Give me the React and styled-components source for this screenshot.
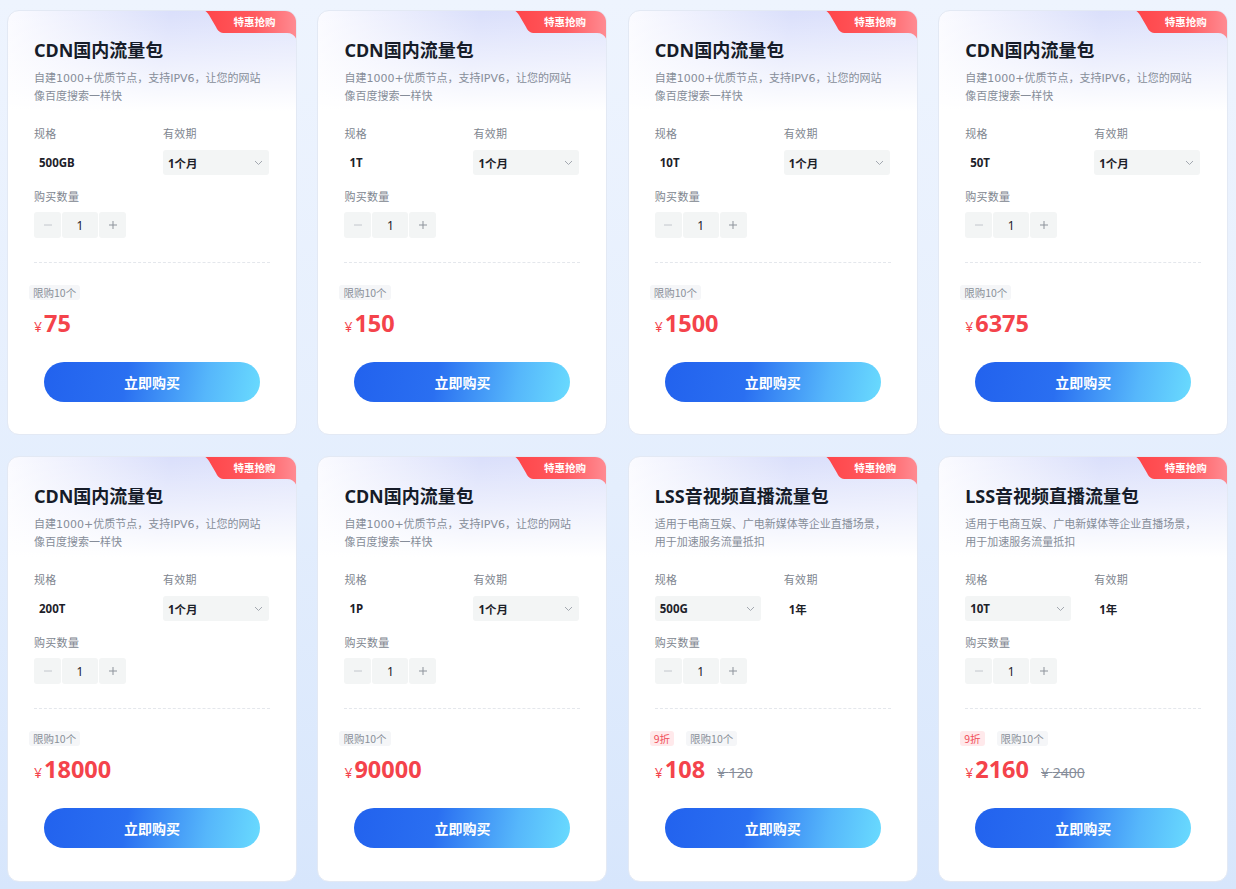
import React from "react";
import styled, { createGlobalStyle } from "styled-components";

const GlobalStyle = createGlobalStyle`
  html, body {
    margin: 0;
    padding: 0;
    min-height: 100%;
  }
  body {
    font-family: "Noto Sans", "Noto Sans CJK SC", sans-serif;
    background: linear-gradient(180deg, #eef4fe 0%, #e4eefd 55%, #d7e6fc 100%);
    min-height: 100vh;
  }
`;

const Page = styled.div`
  padding: 10px 8px 7px 7px;
`;

const Grid = styled.div`
  display: grid;
  grid-template-columns: repeat(4, 290px);
  column-gap: 20.4px;
  row-gap: 21px;
`;

const Card = styled.div`
  position: relative;
  overflow: hidden;
  box-sizing: border-box;
  height: ${(p) => p.$height}px;
  border-radius: 12px;
  border: 1px solid #e3e9f4;
  padding: 27px 26px 0 26px;
  background:
    linear-gradient(180deg, rgba(255, 255, 255, 0) 0px, #fff 100px),
    linear-gradient(100deg, #fbfbff 0%, #dadffb 45%, #e2e6fc 100%);
  display: flex;
  flex-direction: column;
`;

const BadgeWrap = styled.div`
  position: absolute;
  top: -1px;
  right: -1px;
  width: 95px;
  height: 34px;
`;

const BadgeText = styled.span`
  position: absolute;
  left: 18px;
  right: 8px;
  top: 0;
  height: 22px;
  display: flex;
  align-items: center;
  justify-content: center;
  font-family: "Noto Sans CJK SC", sans-serif;
  font-size: 10.5px;
  font-weight: 700;
  color: #fff;
`;

const Title = styled.div`
  font-family: "Noto Sans", "Noto Sans CJK SC", sans-serif;
  font-size: 18px;
  font-weight: 700;
  line-height: 24px;
  color: #161c29;
`;

const Desc = styled.div`
  margin-top: 8px;
  width: 233px;
  font-family: "DejaVu Sans", "Noto Sans CJK SC", sans-serif;
  font-size: 11px;
  line-height: 18px;
  color: #868d99;
  height: 36px;
`;

const FieldRow = styled.div`
  margin-top: 18px;
  display: grid;
  grid-template-columns: 129px 107px;
`;

const Field = styled.div`
  display: flex;
  flex-direction: column;
`;

const Label = styled.div`
  font-family: "Noto Sans CJK SC", sans-serif;
  font-size: 11px;
  letter-spacing: 0.3px;
  line-height: 18px;
  color: #80868f;
`;

const Value = styled.div`
  margin-top: 8px;
  height: 25px;
  display: flex;
  align-items: center;
  padding-left: 5px;
  font-family: "Noto Sans", "Noto Sans CJK SC", sans-serif;
  font-size: 11.5px;
  font-weight: 700;
  color: #1d2129;
`;

const Select = styled(Value)`
  width: 106px;
  box-sizing: border-box;
  justify-content: space-between;
  padding-right: 6px;
  background: #f3f5f5;
  border-radius: 3px;
`;

const QtyLabel = styled(Label)`
  margin-top: 12px;
`;

const Stepper = styled.div`
  margin-top: 7px;
  display: flex;
  gap: 1px;
`;

const StepBtn = styled.div`
  width: 27px;
  height: 26px;
  border-radius: 3px;
  background: #f3f5f5;
  display: flex;
  align-items: center;
  justify-content: center;
`;

const StepValue = styled(StepBtn)`
  width: 36px;
  font-size: 12px;
  color: #1d2129;
`;

const Divider = styled.div`
  margin-top: 24px;
  border-top: 1px dashed #e4e7ec;
`;

const Tags = styled.div`
  margin-top: 22px;
  margin-left: -5px;
  display: flex;
  gap: 12px;
`;

const Tag = styled.span`
  height: 15px;
  padding: 0 4px;
  border-radius: 3px;
  display: inline-flex;
  align-items: center;
  font-family: "Noto Sans CJK SC", sans-serif;
  font-size: 10.5px;
  color: ${(p) => (p.$red ? "#f0505a" : "#8a9099")};
  background: ${(p) => (p.$red ? "#ffe9eb" : "#f5f6f8")};
`;

const PriceRow = styled.div`
  margin-top: 8px;
  height: 30px;
  display: flex;
  align-items: baseline;
  color: #f4434b;
`;

const Yen = styled.span`
  font-size: 14px;
  margin-right: 2px;
`;

const Amount = styled.span`
  font-size: 23.5px;
  font-weight: 700;
  line-height: 30px;
`;

const Original = styled.span`
  margin-left: 12px;
  font-size: 14px;
  color: #868d99;
  text-decoration: line-through;
`;

const BuyButton = styled.button`
  margin: 24px auto 0;
  width: 216px;
  height: 40px;
  border: none;
  border-radius: 20px;
  background: linear-gradient(100deg, #2262ee 0%, #2a6ff1 38%, #56b7fb 75%, #69dbfe 100%);
  color: #fff;
  font-family: "Noto Sans CJK SC", sans-serif;
  font-size: 14px;
  font-weight: 700;
  cursor: pointer;
`;

const Chevron = () => (
  <svg width="9" height="6" viewBox="0 0 9 6">
    <path d="M1 1 L4.5 4.5 L8 1" fill="none" stroke="#a3a8b0" strokeWidth="1" />
  </svg>
);

const Minus = () => (
  <svg width="10" height="10" viewBox="0 0 10 10">
    <path d="M1 5 H9" stroke="#c2c6cc" strokeWidth="1" />
  </svg>
);

const Plus = () => (
  <svg width="10" height="10" viewBox="0 0 10 10">
    <path d="M1 5 H9 M5 1 V9" stroke="#8d939b" strokeWidth="1" />
  </svg>
);

const Badge = ({ id }) => (
  <BadgeWrap>
    <svg width="95" height="34" viewBox="0 0 95 34" style={{ position: "absolute", inset: 0 }}>
      <defs>
        <linearGradient id={id} x1="0" y1="0" x2="1" y2="0">
          <stop offset="0" stopColor="#ff4448" />
          <stop offset="0.55" stopColor="#ff5a5f" />
          <stop offset="1" stopColor="#ff8c93" />
        </linearGradient>
      </defs>
      <path
        d="M0 0 H95 V34 C95 27 91 23 85 23 H23 C18 23 16 21 14 17 L7 5 C5 2 3 0 0 0 Z"
        fill={`url(#${id})`}
      />
    </svg>
    <BadgeText>特惠抢购</BadgeText>
  </BadgeWrap>
);

const cdnDesc = "自建1000+优质节点，支持IPV6，让您的网站像百度搜索一样快";
const lssDesc = "适用于电商互娱、广电新媒体等企业直播场景，用于加速服务流量抵扣";

const products = [
  { title: "CDN国内流量包", desc: cdnDesc, spec: "500GB", period: "1个月", price: "75" },
  { title: "CDN国内流量包", desc: cdnDesc, spec: "1T", period: "1个月", price: "150" },
  { title: "CDN国内流量包", desc: cdnDesc, spec: "10T", period: "1个月", price: "1500" },
  { title: "CDN国内流量包", desc: cdnDesc, spec: "50T", period: "1个月", price: "6375" },
  { title: "CDN国内流量包", desc: cdnDesc, spec: "200T", period: "1个月", price: "18000" },
  { title: "CDN国内流量包", desc: cdnDesc, spec: "1P", period: "1个月", price: "90000" },
  {
    title: "LSS音视频直播流量包",
    desc: lssDesc,
    spec: "500G",
    period: "1年",
    price: "108",
    original: "120",
    lss: true,
  },
  {
    title: "LSS音视频直播流量包",
    desc: lssDesc,
    spec: "10T",
    period: "1年",
    price: "2160",
    original: "2400",
    lss: true,
  },
];

const ProductCard = ({ item, index }) => (
  <Card $height={index < 4 ? 425 : 426}>
    <Badge id={`badge-grad-${index}`} />
    <Title>{item.title}</Title>
    <Desc>{item.desc}</Desc>
    <FieldRow>
      <Field>
        <Label>规格</Label>
        {item.lss ? (
          <Select>
            <span>{item.spec}</span>
            <Chevron />
          </Select>
        ) : (
          <Value>{item.spec}</Value>
        )}
      </Field>
      <Field>
        <Label>有效期</Label>
        {item.lss ? (
          <Value>{item.period}</Value>
        ) : (
          <Select>
            <span>{item.period}</span>
            <Chevron />
          </Select>
        )}
      </Field>
    </FieldRow>
    <QtyLabel>购买数量</QtyLabel>
    <Stepper>
      <StepBtn>
        <Minus />
      </StepBtn>
      <StepValue>1</StepValue>
      <StepBtn>
        <Plus />
      </StepBtn>
    </Stepper>
    <Divider />
    <Tags>
      {item.original && <Tag $red>9折</Tag>}
      <Tag>限购10个</Tag>
    </Tags>
    <PriceRow>
      <Yen>¥</Yen>
      <Amount>{item.price}</Amount>
      {item.original && <Original>¥ {item.original}</Original>}
    </PriceRow>
    <BuyButton>立即购买</BuyButton>
  </Card>
);

const App = () => {
  return (
    <Page>
      <GlobalStyle />
      <Grid>
        {products.map((item, index) => (
          <ProductCard key={index} item={item} index={index} />
        ))}
      </Grid>
    </Page>
  );
};

export default App;
